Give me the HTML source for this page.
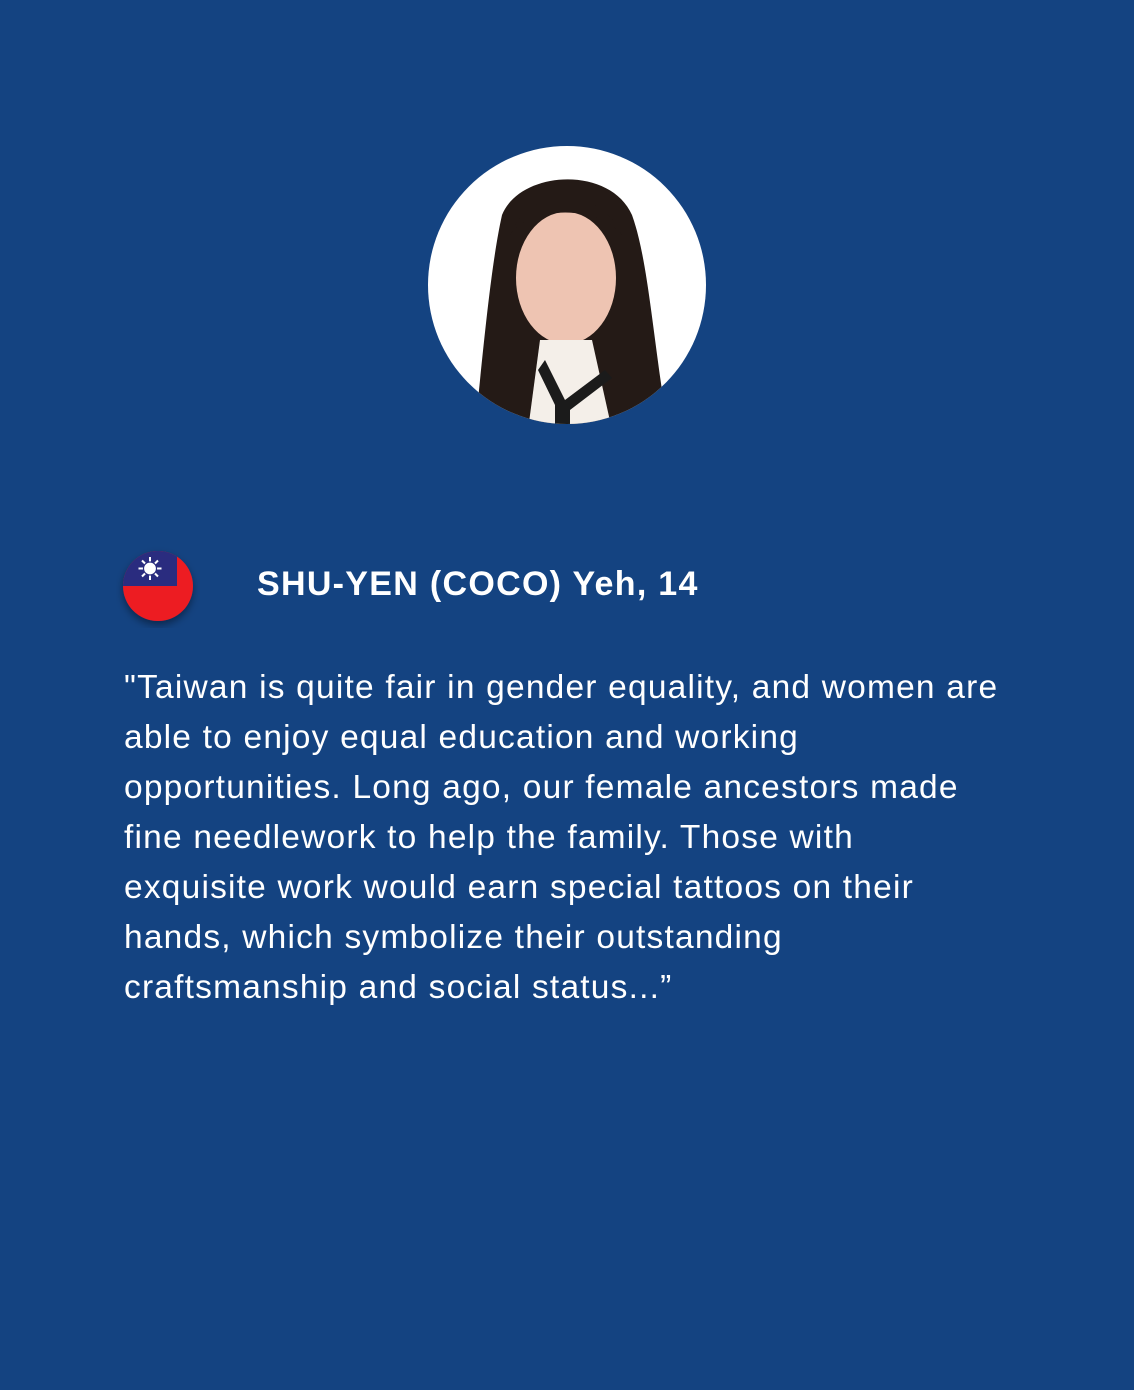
<!DOCTYPE html>
<html><head><style>
html,body{margin:0;padding:0}
body{width:1134px;height:1390px;background:#144381;position:relative;overflow:hidden;font-family:"Liberation Sans",sans-serif;color:#fff}
.name{position:absolute;left:257px;top:565px;font-size:34px;font-weight:bold;letter-spacing:1.3px;white-space:nowrap}
.q{position:absolute;left:124px;top:663px;width:1000px;font-size:33.5px;line-height:50px;white-space:nowrap;letter-spacing:1.2px}
</style></head><body>
<svg style="position:absolute;left:0;top:0" width="1134" height="700">
<defs><clipPath id="c"><circle cx="567" cy="285" r="139"/></clipPath>
<clipPath id="f"><circle cx="158" cy="586" r="35"/></clipPath>
<filter id="s"><feDropShadow dx="0" dy="4" stdDeviation="4" flood-color="#000" flood-opacity="0.4"/></filter></defs>
<circle cx="567" cy="285" r="139" fill="#fff"/>
<g clip-path="url(#c)">
<path d="M475 430 C485 330 492 260 502 215 C520 170 610 165 632 215 C648 260 652 330 668 430 Z" fill="#241a16"/>
<ellipse cx="566" cy="278" rx="50" ry="66" fill="#eec4b2"/>
<path d="M540 340 L592 340 L612 430 L528 430 Z" fill="#f4efe9"/>
<path d="M545 360 L565 400 L605 370 L612 378 L570 410 L570 430 L555 430 L555 405 L538 370Z" fill="#1b1b1b"/>
<path d="M510 235 C530 185 600 185 622 235 C600 205 530 205 510 235Z" fill="#241a16"/>
</g>
<g filter="url(#s)">
<circle cx="158" cy="586" r="35" fill="#ed1c24"/>
</g>
<g clip-path="url(#f)">
<rect x="120" y="548" width="57" height="38" fill="#2a2c7f"/>
<g stroke="#fff" stroke-width="2">
<line x1="150" y1="557" x2="150" y2="580"/><line x1="138.5" y1="568.5" x2="161.5" y2="568.5"/>
<line x1="142" y1="560.5" x2="158" y2="576.5"/><line x1="158" y1="560.5" x2="142" y2="576.5"/>
</g>
<circle cx="150" cy="568.5" r="6.5" fill="#fff" stroke="#2a2c7f" stroke-width="1.2"/>
</g>
</svg>
<div class="name">SHU-YEN (COCO) Yeh, 14</div>
<div class="q">"Taiwan is quite fair in gender equality, and women are<br>able to enjoy equal education and working<br>opportunities. Long ago, our female ancestors made<br>fine needlework to help the family. Those with<br>exquisite work would earn special tattoos on their<br>hands, which symbolize their outstanding<br>craftsmanship and social status...”</div>
</body></html>
